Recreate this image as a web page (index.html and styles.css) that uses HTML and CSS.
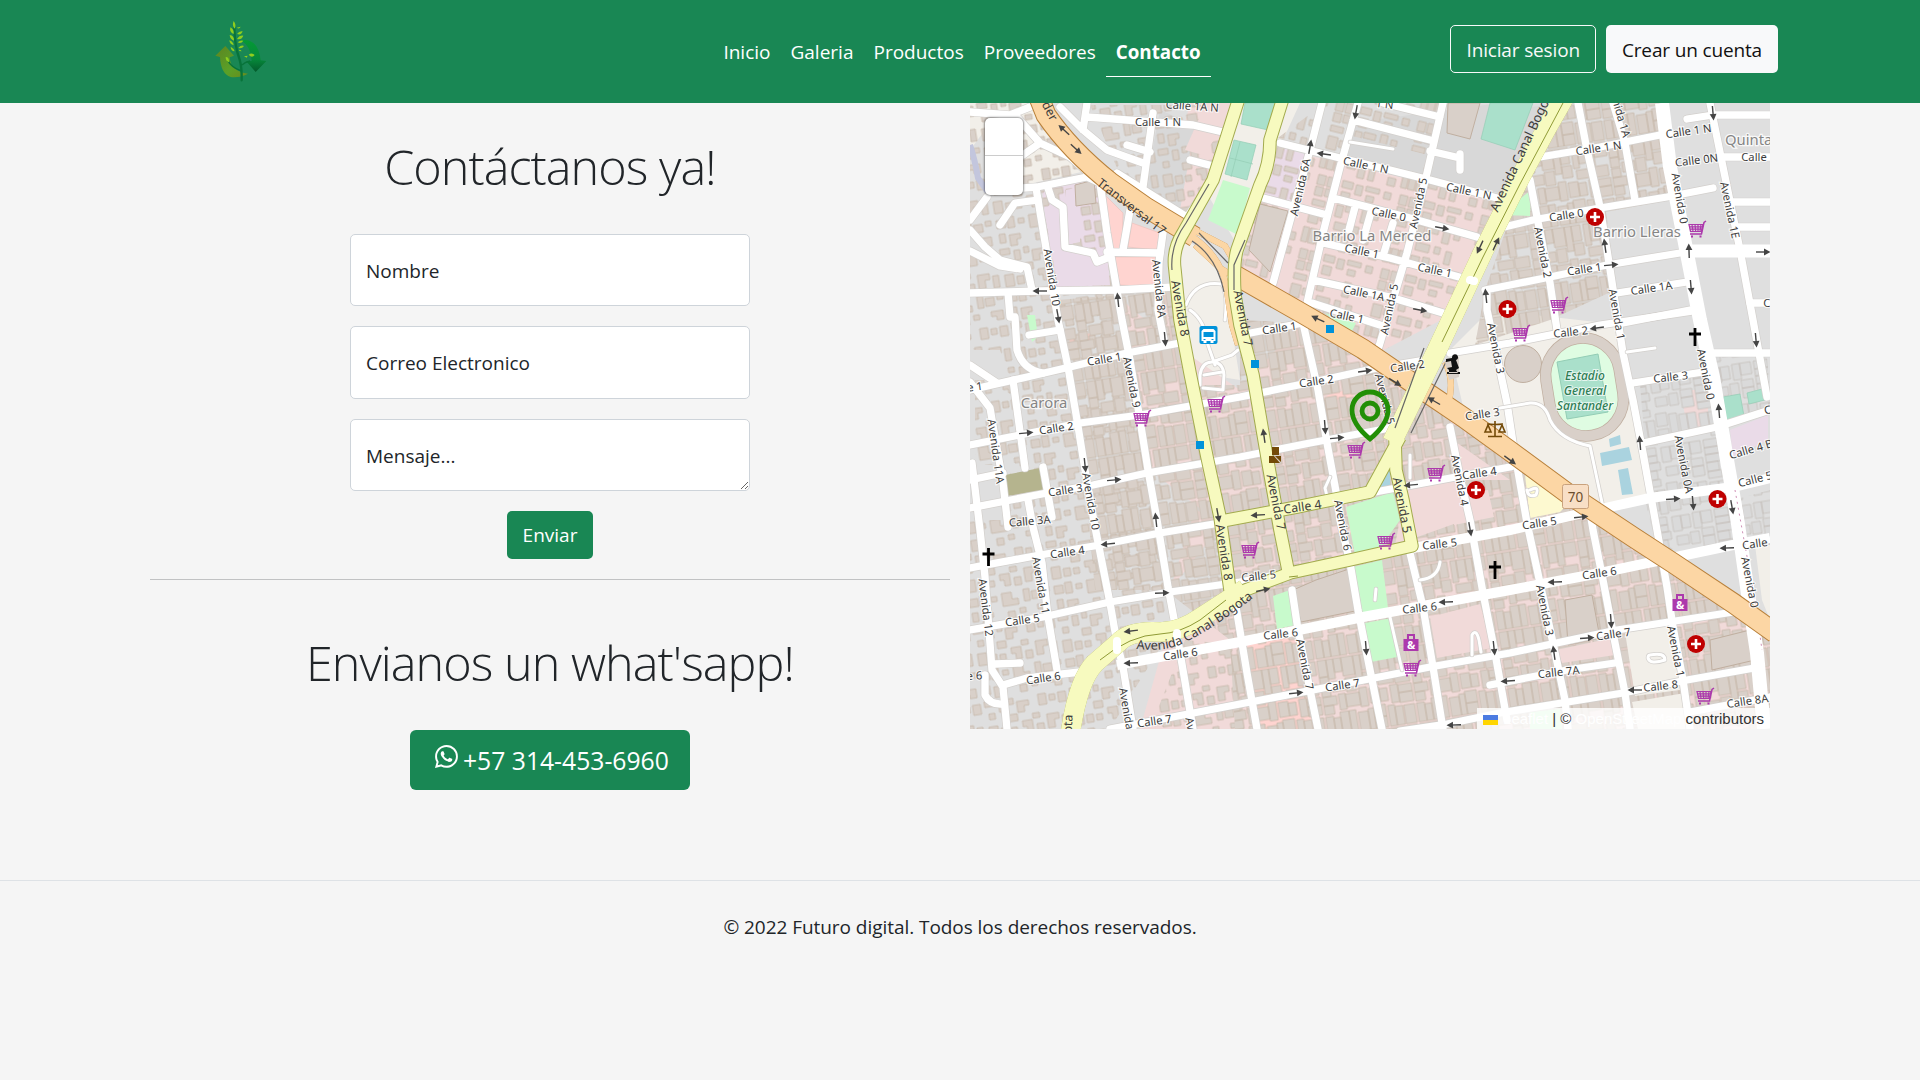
FILE: index.html
```html
<!DOCTYPE html>
<html lang="es">
<head>
<meta charset="utf-8">
<title>Contacto - Futuro digital</title>
<link rel="stylesheet" href="styles.css">
</head>
<body>
<header class="navbar">
  <a class="brand" href="#" aria-label="Inicio">
    <svg width="60" height="64" viewBox="60 58 180 192">
      <defs>
        <linearGradient id="g1" x1="0" y1="0" x2="0" y2="1"><stop offset="0" stop-color="#049a35"/><stop offset=".6" stop-color="#06883a"/><stop offset="1" stop-color="#035a2c"/></linearGradient>
        <linearGradient id="g2" x1="0" y1="0" x2="1" y2="1"><stop offset="0" stop-color="#5d8420"/><stop offset=".6" stop-color="#5aa128"/><stop offset="1" stop-color="#6b8a1c"/></linearGradient>
      </defs>
      <path fill="url(#g1)" d="M152 122Q205 114 212 182L229 184 197 217 168 184H185Q184 140 152 122Z"/>
      <path fill="url(#g2)" d="M76 168 106 139 132 168 119 173Q122 216 174 222 150 235 122 232 92 222 90 172Z"/>
      <path fill="none" stroke="#08733a" stroke-width="7" stroke-linecap="round" d="M133 85Q134 140 149 180 156 205 155 242"/>
      <path fill="none" stroke="#08733a" stroke-width="4" d="M152 213Q124 203 113 182M156 196Q164 188 180 184"/>
      <path fill="#8fce1e" d="M131 64q9 12 3 23-9-10-3-23ZM121 83q12 7 10 20-13-5-10-20ZM119 106q14 2 13 17-12-4-13-17ZM118 122q12 4 13 15-12-3-13-15ZM122 141q10 5 12 14-12-2-12-14ZM140 84l12-3q-4 9-12 3ZM141 103q7-10 17-8-4 13-17 8ZM141 118q8-12 19-10-5 13-19 10ZM143 128q8-8 17-5-7 10-17 5ZM145 145q8-10 17-6-6 9-17 6ZM147 151q5-2 8 4l-7-1ZM107 172q11 0 10 16-10-3-10-16ZM162 170l11-2-3 6ZM176 165q10-8 18 1-8 11-18-1Z"/>
    </svg>
  </a>
  <nav class="links">
    <a href="#">Inicio</a><a href="#">Galeria</a><a href="#">Productos</a><a href="#">Proveedores</a><a class="active" href="#">Contacto</a>
  </nav>
  <div class="account">
    <a class="btn btn-outline" href="#">Iniciar sesion</a>
    <a class="btn btn-light" href="#">Crear un cuenta</a>
  </div>
</header>

<main class="content">
  <section class="contact">
    <h1 class="title">Contáctanos ya!</h1>
    <form class="form">
      <input class="field" type="text" placeholder="Nombre">
      <input class="field" type="text" placeholder="Correo Electronico">
      <textarea class="field area" placeholder="Mensaje..."></textarea>
      <button class="btn btn-green" type="button">Enviar</button>
    </form>
    <hr class="rule">
    <h2 class="title title-wa">Envianos un what'sapp!</h2>
    <a class="whatsapp" href="#">
      <svg width="23" height="23" viewBox="0 0 16 16" fill="#fff"><path d="M13.601 2.326A7.854 7.854 0 0 0 7.994 0C3.627 0 .068 3.558.064 7.926c0 1.399.366 2.76 1.057 3.965L0 16l4.204-1.102a7.933 7.933 0 0 0 3.79.965h.004c4.368 0 7.926-3.558 7.93-7.93A7.898 7.898 0 0 0 13.6 2.326zM7.994 14.521a6.573 6.573 0 0 1-3.356-.92l-.24-.144-2.494.654.666-2.433-.156-.251a6.56 6.56 0 0 1-1.007-3.505c0-3.626 2.957-6.584 6.591-6.584a6.56 6.56 0 0 1 4.66 1.931 6.557 6.557 0 0 1 1.928 4.66c-.004 3.639-2.961 6.592-6.592 6.592zm3.615-4.934c-.197-.099-1.17-.578-1.353-.646-.182-.065-.315-.099-.445.099-.133.197-.513.646-.627.775-.114.133-.232.148-.43.05-.197-.1-.836-.308-1.592-.985-.59-.525-.985-1.175-1.103-1.372-.114-.198-.011-.304.088-.403.087-.088.197-.232.296-.346.1-.114.133-.198.198-.33.065-.134.034-.248-.015-.347-.05-.099-.445-1.076-.612-1.47-.16-.389-.323-.335-.445-.34-.114-.007-.247-.007-.38-.007a.729.729 0 0 0-.529.247c-.182.198-.691.677-.691 1.654 0 .977.71 1.916.81 2.049.098.133 1.394 2.132 3.383 2.992.47.205.84.326 1.129.418.475.152.904.129 1.246.08.38-.058 1.171-.48 1.338-.943.164-.464.164-.86.114-1.057-.049-.084-.182-.133-.38-.232z"/></svg>
      <span>+57 314-453-6960</span>
    </a>
  </section>

  <section class="map">
    <svg class="tiles" viewBox="970 103 800 626">
      <defs>
        <pattern id="sparse" width="86" height="74" patternUnits="userSpaceOnUse" patternTransform="rotate(-9)">
          <path class="bld" d="M3 4h9v8H3zM14 2h7v11h-7zM25 5h6v5h-6zM36 3h10v7h6v6H36zM58 2h6v12h-6zM66 5h9v8h-9zM78 3h6v5h-6zM4 18h6v9H4zM14 20h11v5h-4v6h-7zM40 22h7v7h-7zM52 20h6v5h-6zM70 19h12v9h-7v-4h-5zM2 33h10v6H2zM16 36h6v10h-6zM26 34h5v6h-5zM34 38h12v5h-5v6h-7zM56 34h8v11h-8zM67 36h6v6h-6zM76 35h8v10h-8zM5 46h6v6H5zM24 50h9v7h-9zM48 52h7v5h-7zM3 59h9v12H3zM15 62h7v8h-7zM25 63h6v6h-6zM37 58h10v12h-6v-6h-4zM51 63h7v8h-7zM62 55h12v6h-5v8h-7zM77 58h6v12h-6z"/>
        </pattern>
        <pattern id="dense" width="92" height="78" patternUnits="userSpaceOnUse" patternTransform="rotate(-9)">
          <path class="bld" d="M1 1h9v17H1zM10 1h7v20h-7zM17 1h8v14h-8zM25 1h12v19H25zM37 1h7v25h-7zM44 1h9v16h-9zM56 1h6v22h-6zM62 1h9v18h-9zM71 1h7v22h-7zM78 1h13v14H78zM1 18h9v10H1zM12 24h13v10H12zM26 22h10v14H26zM44 19h10v12H44zM58 25h16v9H58zM75 24h15v11H75zM1 29h9v9H1zM1 38h14v9H1zM1 47h10v9H1zM17 37h7v16h-7zM24 38h14v13H24zM38 34h8v19h-8zM48 36h10v15H48zM58 38h8v13h-8zM69 36h8v18h-8zM77 37h14v8H77zM77 45h14v10H77zM1 58h8v19H1zM9 60h7v17H9zM16 55h9v22h-9zM25 55h7v22h-7zM34 58h10v19H34zM44 56h6v21h-6zM50 54h12v12H50zM50 66h12v11H50zM64 56h7v21h-7zM71 58h8v19h-8zM80 58h11v19H80z"/>
        </pattern>
        <pattern id="plots" width="62" height="70" patternUnits="userSpaceOnUse" patternTransform="rotate(-9)">
          <path fill="#dadada" stroke="#c3bdb8" stroke-width=".7" d="M1 1h14v8H1zM1 9h14v7H1zM1 16h16v8H1zM1 24h12v9H1zM1 33h14v7H1zM20 2h9v15h-9zM29 2h9v13h-9zM41 1h8v16h-8zM49 1h11v12H49zM22 22h12v9H22zM36 20h9v12h-9zM48 18h12v8H48zM48 26h12v10H48zM1 44h9v20H1zM10 44h8v24h-8zM20 38h11v13H20zM33 40h8v22h-8zM43 42h8v22h-8zM51 42h9v20h-9zM20 54h11v12H20z"/>
        </pattern>
        <pattern id="merced" width="84" height="76" patternUnits="userSpaceOnUse" patternTransform="rotate(14)">
          <path class="bld" d="M3 2h11v7H3zM17 3h7v10h-7zM27 2h14v5H27zM46 3h7v7h-7zM62 2h8v10h-8zM72 2h9v10h-9zM4 13h9v9H4zM29 11h8v6h-8zM62 14h8v9h-8zM72 14h9v8h-9zM3 27h7v12H3zM12 26h12v6H12zM29 24h7v15h-7zM40 27h6v6h-6zM62 27h13v6H62zM5 44h14v8H5zM24 44h6v7h-6zM36 46h6v13h-6zM62 38h10v13H62zM74 40h7v7h-7zM3 58h9v7H3zM15 57h7v15h-7zM26 60h6v12h-6zM46 64h8v8h-8zM60 56h6v15h-6zM67 56h7v15h-7zM75 56h6v15h-6z"/>
        </pattern>
        <g id="arr"><path d="M-7 0H4" stroke="#444" stroke-width="1.4"/><path d="M7.500 0 1-3.400V3.400Z" fill="#444"/></g>
        <g id="cart" fill="none" stroke="#ac39ac" stroke-width="1.200"><path d="M-8-4.500H6L4.500 2.500H-6.500ZM-7.500-2.200H5.500M-7 .200H5M-5-4.500-4 2.500M-2-4.500-1.300 2.500M1-4.500V2.500M4-4.500 3 2.500"/><path stroke-width="1.500" d="M9-8 7-6.500 4.500 5H-7"/><path d="M-6 7.500h2M2.500 7.500h2" stroke-width="2.200"/></g>
        <g id="hosp"><circle r="9" fill="#bf0000"/><path d="M0-5V5M-5 0H5" stroke="#fff" stroke-width="2.6"/></g>
        <path id="church" d="M0-9V9M-6-3H6" stroke="#000" stroke-width="2.8"/>
        <g id="bag"><path d="M-3-4V-8H3V-4" fill="none" stroke="#ac39ac" stroke-width="2"/><rect x="-7.500" y="-4" width="15" height="12" fill="#ac39ac"/><text class="amp" x="0" y="6">&amp;</text></g>
        <path id="canal" d="M1136 649Q1165 652 1182 644 1215 628 1258 594"/>
      </defs>

      <rect x="970" y="103" width="800" height="626" fill="#dfdfdf"/>
      <!-- land use -->
      <path fill="#f2efe9" d="M970 103H1042L1090 170 1020 186 985 130 970 150ZM1180 233 1240 285 1232 330 1240 380 1190 372 1175 290ZM1490 310 1622 325 1650 500 1600 510 1500 445 1465 415 1450 350ZM1240 103H1300L1260 190 1240 250 1205 190Z"/>
      <path fill="#f1dad9" d="M1286 150 1497 200 1445 318 1380 352 1235 285 1263 190ZM1190 103 1240 103 1190 218 1165 205ZM1122 300 1175 345 1240 390 1300 323 1510 453 1600 510 1770 630V729H1140L1165 640 1225 590 1215 520 1150 470 1128 360ZM1170 590 1225 520 1195 510ZM1680 390h28v40h-20z"/>
      <path fill="#d8d8d8" d="M1160 110 1195 125 1180 210 1145 190ZM1350 123 1500 103 1510 195 1430 180 1350 150Z"/>
      <path fill="#eadbe8" d="M1042 190 1090 178 1100 190 1110 285 1055 287ZM1278 147 1308 155 1292 203 1265 195ZM1730 430 1768 415V440L1733 457Z"/>
      <path fill="#ffd4d0" d="M1247 643 1297 633 1313 729H1258ZM1068 336l25-3 2 12-23 4zM1328 395l25-7v10l-30 3z"/>
      <path fill="#f1dad9" d="M1155 290h18l7 50-18 3zM1135 358l25-8 5 60-22 5z"/>
      <!-- buildings -->
      <path fill="url(#sparse)" d="M970 103H1042L1110 190 1122 300 1128 360 1150 470 1165 590V640L1110 729H970V520H1010V465H975V380H1010L1000 350H970ZM1090 105H1240L1190 225 1120 175ZM1185 640 1240 645 1250 729H1150Z"/>
      <path fill="url(#dense)" d="M1058 300 1175 290 1195 385 1240 385 1240 320 1300 323 1490 440 1510 453 1600 510 1770 630V729H1235L1230 640 1165 590 1095 590 1085 480 1068 360ZM1530 160 1560 103H1660L1700 320 1630 250 1600 215 1615 290 1550 320 1475 345 1485 290Z"/>
      <path fill="#dfdfdf" d="M1606 212 1680 198 1713 377 1633 390Z"/>
      <path fill="url(#merced)" d="M1275 140 1325 103H1440L1425 180 1497 200 1445 318 1380 352 1235 285Z"/>
      <path fill="#d8d8d8" d="M1348 135 1428 155 1420 178 1345 158ZM1440 120 1560 103 1510 195 1430 176Z"/>
      <path fill="url(#plots)" d="M1640 385 1708 375 1733 500 1770 490V410L1715 430 1710 355 1767 355 1770 400V545L1660 560 1650 500ZM1645 500 1735 490V540L1660 560Z"/>
      <path fill="#eadbe8" d="M1050 205 1062 210 1064 250 1092 258 1096 266 1108 262 1110 285 1058 287 1044 210ZM1066 190l14-3v55l-14 3z"/>
      <path fill="#ffd4d0" stroke="#eec1bb" stroke-width=".7" d="M1103 193 1123 213 1122 250 1110 250ZM1132 223 1160 233 1157 250 1128 247ZM1113 257 1157 257 1160 287 1120 285Z"/>
      <path fill="#f2efe9" d="M1625 632 1670 620 1680 690 1635 696ZM1632 702 1685 693 1688 729H1638ZM1755 545H1770V620L1762 600Z"/>
      <path fill="#f1dad9" d="M1430 617 1480 604 1492 648 1437 658ZM1556 650 1612 638 1615 655 1562 663ZM1510 480 1453 440 1465 520 1395 545 1408 480ZM1240 105h-35l-20 45 18 5zM1453 495l35-5 6 27-40 8z"/>
      <path fill="#d9d0c9" stroke="#c0afa0" d="M1260 204 1288 211 1270 272 1249 250ZM1448 103H1480L1470 139 1447 133ZM1075 185 1094 180 1096 203 1076 206ZM1293 590 1316 580 1355 567 1360 610 1301 622ZM1565 600 1592 595 1600 638 1568 645ZM1710 640 1750 630 1755 660 1712 670Z"/>
      <!-- parks, pitches and water -->
      <path fill="#c8facc" d="M1223 180 1250 188 1238 235 1208 220ZM1346 507 1393 492 1400 520 1380 548 1355 555ZM1353 567 1382 560 1388 608 1362 615ZM1365 623 1392 618 1397 657 1371 662ZM1273 596 1290 590 1295 625 1277 629ZM1325 313 1356 323 1350 335ZM1027 315h8l3 22-6 5zM1500 215 1531 190 1530 216ZM1236 582l48-4-12 9-34 7zM1530 712l30-3 2 20h-32z"/>
      <path fill="#aae0cb" stroke="#93cdb5" stroke-width=".7" d="M1245 103H1277L1268 130 1241 124ZM1234 140 1256 145 1247 180 1225 174ZM1490 103H1533L1515 150 1481 139ZM1723 397l17-3 4 22-17 4zM1747 393l15-4 3 11-16 4zM1240 142l-9 35M1230 158l23 6"/>
      <path fill="#b5b48e" d="M1005 475 1040 468 1044 490 1007 496Z"/>
      <path fill="#aad3df" d="M1609 439l11-4 1 9-11 3zM1600 453l29-6 3 13-30 6zM1618 470l10-2 5 26-11 1zM1380 487l10-22v20l-4 6z"/>
      <path fill="none" stroke="#c3c6dd" stroke-width="6" d="M970 145Q975 160 978 178L988 192"/>
      <circle cx="1523" cy="364" r="18.500" fill="#d9d0c9" stroke="#c0afa0"/>
      <g transform="translate(1584.500 387) rotate(-9)"><rect x="-37" y="-49" width="74" height="98" rx="37" fill="#dffce2" stroke="#c0afa0" stroke-width="11.500"/><rect x="-37" y="-49" width="74" height="98" rx="37" fill="none" stroke="#d9d0c9" stroke-width="10"/></g>
      <path fill="#aae0cb" stroke="#93cdb5" d="M1557 362 1598 354 1608 412 1567 419Z"/>
      <path fill="#fdf9d0" d="M1525 475 1567 505 1560 512 1530 518Z"/>

      <!-- local streets -->
      <g class="street casing"><use href="#streets"/></g>
      <g class="street"><g id="streets">
        <path d="M1036 188 1058 320 1068 367 1077 420 1085 470 1095 527 1110 603 1117 643 1123 667 1133 729M1100 183 1107 233 1122 320 1130 360 1140 420 1148 470 1157 520 1168 587 1177 635 1183 670 1193 729M1163 233 1159 262 1158 310 1165 345M1013 380 1025 468M970 382 990 408 1003 483 1008 527M1028 500 1033 527 1042 563 1048 617 1057 670M972 463 980 530 985 577 992 670 1003 687 1007 729M1043 467 1052 517"/>
        <path d="M970 293 1040 291 1117 290 1173 287M970 390 1027 377 1070 367 1127 353 1180 343M970 445 1020 435 1080 423 1140 415 1240 397 1313 382 1377 368 1425 360M1450 353 1510 343 1600 325 1700 310M970 508 1047 493 1093 485 1147 473 1240 457 1310 443 1390 428M970 480 1003 473M970 568 1040 555 1100 545 1160 533 1220 523M970 630 1043 617 1110 602 1170 592 1240 582 1285 573M1003 685 1027 678 1080 672M1110 729 1240 704 1313 690 1430 667 1510 653 1617 630 1740 611M1400 731 1447 724 1500 713 1623 693 1687 680 1760 667M1490 685 1567 670 1615 663M1690 712 1770 697M1375 492 1510 467 1522 463"/>
        <path d="M1643 443 1717 427 1770 410M1633 383 1703 372M1713 353H1770M1303 323 1318 390 1327 443 1337 497 1340 520 1350 563 1358 610 1370 670 1382 729M1240 335 1303 323M1292 590 1298 630 1310 690 1318 729M1234 595 1237 613 1247 673 1257 729M1410 553 1423 607 1433 667 1443 729M1450 427 1460 477 1470 520 1483 593 1495 653 1507 720M1487 293V310L1507 403 1513 443 1527 523 1540 583 1553 643 1565 700 1568 729M1485 290 1510 285 1550 277 1607 265 1680 253M1530 180 1537 217 1550 283 1557 330M1578 103 1587 150 1600 207 1607 250 1623 353 1633 400 1643 453 1657 530 1667 587 1673 627 1683 680 1690 729M1590 512 1593 530 1603 580 1615 643 1625 693 1630 729M1613 103 1625 143 1635 200M1710 103 1723 167 1740 250 1753 320 1767 397"/>
        <path d="M1540 157 1600 147 1660 135M1687 119 1713 115H1770M1500 228 1533 220 1600 208 1667 197 1713 188M1720 157H1770M1733 202H1770M1737 227H1770M1750 303H1770M1617 293 1687 282M1623 323 1690 310M1353 120 1430 140M1383 103 1440 117M1280 143 1340 158 1390 170 1430 180 1497 198M1263 198 1327 215M1333 198 1410 218 1477 237M1323 243 1390 258 1470 280M1313 280 1390 297 1443 313M1312 303 1380 325M1322 103 1310 150 1293 210 1273 283M1358 103 1340 167 1323 233 1307 303M1443 103 1427 173 1407 253 1393 300 1377 353M1355 207 1349 230M1371 212 1363 240M1393 223 1383 256M1430 151 1460 158M1460 154V170"/>
        <path d="M970 112 1010 115 1030 107M1017 117 1040 143 1070 157 1093 177M1040 143 1023 155M1023 188 1037 187 1087 177 1100 183M987 197 970 220M1000 225 1015 203 1038 200M1048 188 1052 200 1063 207 1065 247 1093 253 1097 262 1107 258M970 230 985 247 1000 260 1027 267 1032 290M970 251 1000 266 1020 269M1008 293 1010 317H1015L1017 350Q1023 370 1043 373M1029 335 1060 330M970 365 997 383M1060 107 1083 130 1107 150 1143 163M1087 103 1083 130M1087 117 1127 120 1193 125 1227 133M1153 113 1143 187M1127 145 1150 152M1117 173 1187 217 1213 180M1130 210 1123 250M1107 252 1160 253M1190 160 1213 166M995 664 1020 663M985 675V695Q990 705 1003 704"/>
      </g></g>
      <g class="street thin casing"><use href="#lanes"/></g>
      <g class="street thin"><g id="lanes"><path d="M1500 408 1530 403Q1545 402 1550 420 1560 440 1590 446L1603 507M1390 617 1402 670M1190 310Q1205 320 1208 345L1215 365M1238 350 1232 355 1212 362M1200 385V375Q1202 362 1212 362 1223 362 1224 375L1223 390 1203 388M1204 375 1222 372M1376 589 1375 600M1472 655V635Q1476 628 1479 640L1481 652M1440 562Q1438 578 1420 580M1627 352 1655 348M1328 500 1325 488 1330 477M1410 478V455M1530 490Q1540 485 1536 495 1528 498 1527 490M1650 655Q1665 652 1665 660 1650 665 1648 658 1648 655 1650 655M1186 305Q1195 280 1222 284 1228 295 1225 320M1350 142 1393 149"/></g></g>
      <g fill="none" stroke="#fff">
        <path stroke-width="10" d="M1117 665 1240 642 1363 617 1510 590 1600 573 1733 545 1770 538M1413 548 1510 530 1583 513 1650 498 1733 487 1770 478"/>
        <path stroke-width="13" d="M1690 251H1770"/>
        <path stroke-width="14" d="M1662 103 1670 167 1683 233 1700 320 1713 377 1727 460 1737 517 1747 587 1757 653 1764 729"/>
      </g>
      <path fill="none" stroke="#cf8fb5" stroke-width="1" stroke-dasharray="2 4" d="M1735 490 1744 540 1755 600 1762 650"/>

      <!-- trunk road -->
      <g class="trunk edge"><use href="#tr"/></g>
      <g class="trunk"><g id="tr"><path d="M1038 95 1046 115Q1070 150 1110 182L1147 208 1195 237M1235 275 1305 315 1363 349 1417 386 1463 417 1510 451 1567 493 1633 537 1673 563 1733 603 1775 633"/><path class="slim" d="M1190 235Q1220 255 1226 285L1232 325 1238 345M1195 245 1220 268 1240 280M1190 228 1225 246 1240 272M1432 345 1395 430M1445 362Q1455 380 1448 405"/></g></g>

      <!-- avenues -->
      <g class="avenue edge"><use href="#av"/></g>
      <g class="avenue"><g id="av">
        <path d="M1240 95 1213 180 1183 233Q1172 250 1175 270L1180 320 1190 373 1207 457 1220 517 1230 590"/>
        <path d="M1284 95 1270 140Q1270 165 1260 185L1237 250Q1233 265 1235 295L1240 325 1253 375 1267 457 1280 530 1289 575"/>
        <path d="M1222 521 1297 507 1370 492 1400 437M1395 440 1396 470 1403 500 1412 546 1350 560 1290 573 1240 592"/>
        <path class="wide" d="M1563 98 1520 178 1483 252 1437 350 1392 442M1564 98 1532 154"/>
        <path class="wide" d="M1245 589 1200 618Q1180 632 1160 632 1130 630 1118 643L1095 663Q1078 680 1070 735"/>
      </g></g>
      <path fill="none" stroke="#8f9a35" stroke-width="1" d="M1563 103 1520 184 1483 257 1442 342M1226 600 1200 620Q1180 633 1160 634 1130 635 1100 660M1289 577 1298 576"/>
      <path fill="none" stroke="#666" stroke-width="1.200" d="M1209 184 1186 223Q1170 245 1172 270M1245 240 1234 265 1234 290M1424 348 1395 428M1447 360 1411 433M1192 241Q1217 257 1224 292M1199 233 1228 263"/>
      <path fill="none" stroke="#fff" stroke-width="8" stroke-linecap="round" d="M1117 641V650M1177 633V636M1470 280 1474 281"/>

      <!-- direction arrows -->
      <use href="#arr" transform="translate(1064 130) rotate(222)"/><use href="#arr" transform="translate(1076 149) rotate(42)"/><use href="#arr" transform="translate(1040 291) rotate(180)"/><use href="#arr" transform="translate(1118 300) rotate(-96)"/><use href="#arr" transform="translate(1058 316) rotate(80)"/><use href="#arr" transform="translate(1356 112) rotate(100)"/><use href="#arr" transform="translate(1310 147) rotate(-80)"/><use href="#arr" transform="translate(1324 154) rotate(188)"/><use href="#arr" transform="translate(1442 228) rotate(10)"/><use href="#arr" transform="translate(1480 247) rotate(115)"/><use href="#arr" transform="translate(1496 244) rotate(-65)"/><use href="#arr" transform="translate(1420 310) rotate(10)"/><use href="#arr" transform="translate(1486 296) rotate(-96)"/><use href="#arr" transform="translate(1713 113) rotate(85)"/><use href="#arr" transform="translate(1605 246) rotate(-98)"/><use href="#arr" transform="translate(1611 265) rotate(-5)"/><use href="#arr" transform="translate(1689 251) rotate(-92)"/><use href="#arr" transform="translate(1691 287) rotate(85)"/><use href="#arr" transform="translate(1763 252)"/><use href="#arr" transform="translate(1165 339) rotate(85)"/><use href="#arr" transform="translate(1026 433) rotate(-5)"/><use href="#arr" transform="translate(1085 465) rotate(84)"/><use href="#arr" transform="translate(1114 480) rotate(-5)"/><use href="#arr" transform="translate(1156 520) rotate(-96)"/><use href="#arr" transform="translate(1218 515) rotate(80)"/><use href="#arr" transform="translate(1318 319) rotate(205)"/><use href="#arr" transform="translate(1365 371) rotate(-8)"/><use href="#arr" transform="translate(1395 382) rotate(32)"/><use href="#arr" transform="translate(1434 401) rotate(210)"/><use href="#arr" transform="translate(1325 427) rotate(86)"/><use href="#arr" transform="translate(1264 436) rotate(-98)"/><use href="#arr" transform="translate(1337 438) rotate(-5)"/><use href="#arr" transform="translate(1411 485) rotate(175)"/><use href="#arr" transform="translate(1258 515) rotate(177)"/><use href="#arr" transform="translate(1597 328) rotate(172)"/><use href="#arr" transform="translate(1756 340) rotate(85)"/><use href="#arr" transform="translate(1719 411) rotate(-95)"/><use href="#arr" transform="translate(1640 443) rotate(-95)"/><use href="#arr" transform="translate(1510 460) rotate(36)"/><use href="#arr" transform="translate(1673 499) rotate(-4)"/><use href="#arr" transform="translate(1693 503) rotate(85)"/><use href="#arr" transform="translate(1732 507) rotate(80)"/><use href="#arr" transform="translate(1581 517) rotate(-6)"/><use href="#arr" transform="translate(1108 544) rotate(174)"/><use href="#arr" transform="translate(1162 593) rotate(-2)"/><use href="#arr" transform="translate(1131 631) rotate(173)"/><use href="#arr" transform="translate(1131 663) rotate(178)"/><use href="#arr" transform="translate(1263 590) rotate(-12)"/><use href="#arr" transform="translate(1470 529) rotate(80)"/><use href="#arr" transform="translate(1446 602) rotate(178)"/><use href="#arr" transform="translate(1366 648) rotate(86)"/><use href="#arr" transform="translate(1296 693) rotate(-6)"/><use href="#arr" transform="translate(1494 648) rotate(84)"/><use href="#arr" transform="translate(1454 725) rotate(178)"/><use href="#arr" transform="translate(1727 548) rotate(178)"/><use href="#arr" transform="translate(1555 582) rotate(178)"/><use href="#arr" transform="translate(1611 621) rotate(86)"/><use href="#arr" transform="translate(1587 638) rotate(-4)"/><use href="#arr" transform="translate(1554 653) rotate(-98)"/><use href="#arr" transform="translate(1508 681) rotate(176)"/><use href="#arr" transform="translate(1635 690) rotate(180)"/>

      <!-- street names -->
      <g class="name">
        <text transform="translate(1046 113) rotate(62)" class="big">der</text><text transform="translate(1192 110) rotate(4)">Calle 1A N</text><text transform="translate(1158 126)">Calle 1 N</text><text class="big" transform="translate(1129 210) rotate(38)">Transversal 17</text><text transform="translate(1048 278) rotate(81)">Avenida 10</text><text transform="translate(1155 289) rotate(84)">Avenida 8A</text><text class="big" transform="translate(1176 309) rotate(80)">Avenida 8</text>
        <text transform="translate(1384 108) rotate(8)">1 N</text><text transform="translate(1365 169) rotate(12)">Calle 1 N</text><text transform="translate(1468 195) rotate(12)">Calle 1 N</text><text transform="translate(1304 188) rotate(-77)">Avenida 6A</text><text transform="translate(1422 204) rotate(-78)">Avenida 5</text><text transform="translate(1388 218) rotate(12)">Calle 0</text><text transform="translate(1361 255) rotate(12)">Calle 1</text><text transform="translate(1434 274) rotate(12)">Calle 1</text><text transform="translate(1363 297) rotate(12)">Calle 1A</text><text transform="translate(1393 310) rotate(-78)">Avenida 5</text><text transform="translate(1346 320) rotate(12)">Calle 1</text><text class="big" transform="translate(1239 319) rotate(79)">Avenida 7</text>
        <text class="big canal" transform="translate(1526 152) rotate(-65)">Avenida Canal Bogota</text><text transform="translate(1599 152) rotate(-8)">Calle 1 N</text><text transform="translate(1615 110) rotate(74)">Avenida 1A</text><text transform="translate(1689 135) rotate(-8)">Calle 1 N</text><text transform="translate(1697 164) rotate(-7)">Calle 0N</text><text transform="translate(1754 161)">Calle</text><text transform="translate(1676 199) rotate(80)">Avenida 0</text><text transform="translate(1726 211) rotate(78)">Avenida 1E</text><text transform="translate(1567 219) rotate(-8)">Calle 0</text><text transform="translate(1539 253) rotate(79)">Avenida 2</text><text transform="translate(1585 273) rotate(-8)">Calle 1</text><text transform="translate(1652 292) rotate(-8)">Calle 1A</text><text transform="translate(1613 315) rotate(80)">Avenida 1</text><text transform="translate(1776 307)">Calle</text>
        <text transform="translate(1105 363) rotate(-9)">Calle 1</text><text transform="translate(966 392) rotate(-8)">Calle 1</text><text transform="translate(1128 383) rotate(79)">Avenida 9</text><text transform="translate(1057 432) rotate(-8)">Calle 2</text><text transform="translate(992 452) rotate(82)">Avenida 11A</text><text transform="translate(1066 494) rotate(-8)">Calle 3</text><text transform="translate(1030 525) rotate(-5)">Calle 3A</text><text transform="translate(1087 502) rotate(80)">Avenida 10</text>
        <text transform="translate(1280 332) rotate(-8)">Calle 1</text><text transform="translate(1317 385) rotate(-8)">Calle 2</text><text transform="translate(1408 370) rotate(-8)">Calle 2</text><text transform="translate(1381 400) rotate(76)">Avenida 5</text><text transform="translate(1492 349) rotate(79)">Avenida 3</text><text transform="translate(1483 418) rotate(-8)">Calle 3</text><text transform="translate(1480 477) rotate(-8)">Calle 4</text><text transform="translate(1456 481) rotate(79)">Avenida 4</text><text class="big" transform="translate(1398 506) rotate(79)">Avenida 5</text><text class="big" transform="translate(1272 503) rotate(79)">Avenida 7</text><text class="big" transform="translate(1303 511) rotate(-8)">Calle 4</text><text transform="translate(1339 526) rotate(79)">Avenida 6</text>
        <text transform="translate(1571 336) rotate(-6)">Calle 2</text><text transform="translate(1671 381) rotate(-6)">Calle 3</text><text transform="translate(1702 375) rotate(79)">Avenida 0</text><text transform="translate(1752 453) rotate(-16)">Calle 4 B</text><text transform="translate(1756 483) rotate(-14)">Calle 5</text><text transform="translate(1680 465) rotate(79)">Avenida 0A</text><text transform="translate(1540 527) rotate(-8)">Calle 5</text><text transform="translate(1782 411) rotate(-12)">Calle 4</text>
        <text transform="translate(1068 556) rotate(-8)">Calle 4</text><text transform="translate(1037 586) rotate(80)">Avenida 11</text><text transform="translate(982 608) rotate(83)">Avenida 12</text><text transform="translate(1023 624) rotate(-8)">Calle 5</text><text transform="translate(1044 682) rotate(-8)">Calle 6</text><text transform="translate(965 680) rotate(-2)">Calle 6</text><text transform="translate(1181 658) rotate(-8)">Calle 6</text><text transform="translate(1124 717) rotate(80)">Avenida 10</text><text transform="translate(1155 725) rotate(-8)">Calle 7</text><text class="big" transform="translate(1072 728) rotate(-87)">gota</text><text transform="translate(1189 739) rotate(80)">Avenida</text><text class="big" transform="translate(1220 553) rotate(81)">Avenida 8</text>
        <text transform="translate(1259 580) rotate(-6)">Calle 5</text><text transform="translate(1440 548) rotate(-6)">Calle 5</text><text transform="translate(1281 638) rotate(-6)">Calle 6</text><text transform="translate(1420 612) rotate(-6)">Calle 6</text><text transform="translate(1301 665) rotate(79)">Avenida 7</text><text transform="translate(1343 689) rotate(-8)">Calle 7</text>
        <text transform="translate(1600 577) rotate(-8)">Calle 6</text><text transform="translate(1541 611) rotate(79)">Avenida 3</text><text transform="translate(1614 638) rotate(-8)">Calle 7</text><text transform="translate(1672 652) rotate(79)">Avenida 1</text><text transform="translate(1559 676) rotate(-6)">Calle 7A</text><text transform="translate(1661 690) rotate(-6)">Calle 8</text><text transform="translate(1748 705) rotate(-8)">Calle 8A</text><text transform="translate(1746 583) rotate(79)">Avenida 0</text><text transform="translate(1760 547) rotate(-8)">Calle 5</text>
        <text class="big curve"><textPath href="#canal">Avenida Canal Bogota</textPath></text>
      </g>
      <g class="place"><text x="1372" y="241">Barrio La Merced</text><text x="1637" y="237">Barrio Lleras</text><text x="1044" y="408">Carora</text><text x="1725" y="145" class="left">Quinta Oriental</text></g>
      <g class="stadium"><text x="1585" y="380">Estadio</text><text x="1585" y="395">General</text><text x="1585" y="410">Santander</text></g>
      <g><rect x="1562.500" y="484.500" width="26" height="24" rx="2" fill="#f8dfc6" stroke="#c9a27d"/><text class="ref" x="1575.500" y="501.500">70</text></g>

      <!-- points of interest -->
      <use href="#cart" x="1697" y="229"/><use href="#cart" x="1559" y="305"/><use href="#cart" x="1521" y="333"/><use href="#cart" x="1142" y="418"/><use href="#cart" x="1216" y="404"/><use href="#cart" x="1356" y="450"/><use href="#cart" x="1436" y="473"/><use href="#cart" x="1250" y="550"/><use href="#cart" x="1386" y="541"/><use href="#cart" x="1412" y="668"/><use href="#cart" x="1705" y="696"/>
      <use href="#hosp" x="1595" y="217"/><use href="#hosp" x="1507.500" y="309"/><use href="#hosp" x="1476" y="490"/><use href="#hosp" x="1717.500" y="499"/><use href="#hosp" x="1696" y="644"/>
      <use href="#church" x="1695" y="337"/><use href="#church" x="988.500" y="557"/><use href="#church" x="1495" y="570"/>
      <use href="#bag" x="1411" y="643"/><use href="#bag" x="1680" y="603"/>
      <path fill="#0092da" d="M1326 325h8v8h-8zM1251 360h8v8h-8zM1196 441h8v8h-8z"/>
      <g transform="translate(1208.500 335)"><rect x="-9" y="-9" width="18" height="18" rx="2" fill="#0092da"/><path fill="#fff" fill-rule="evenodd" d="M-5-6H5L7-4V6H5V8H2V6H-2V8H-5V6H-7V-4ZM-5-3V2H5V-3ZM-5 4h2v1h-2zM3 4h2v1H3z"/></g>
      <path fill="#d9d0c9" d="M1445 362l14-5v20l-10 3z"/>
      <path fill="#111" d="M1452 357a3 3 0 1 1 4 3l3 8-3 2 2 3h-9v-3l-2-2 5-1-1-6-5 1v-3l6-1ZM1447 374h13v-2h-13z"/>
      <path fill="#734a08" d="M1272 447h7v8h-7zM1269 456h5l6 7h-11zM1275 456h6v6z"/>
      <path fill="none" stroke="#734a08" stroke-width="1.600" d="M1495 421V436M1488 436.500H1502M1487 424Q1495 425 1503 424M1488 425 1485 432H1491ZM1502 425 1499 432H1505Z"/>

      <g fill="none" stroke="#228f06" stroke-width="4.800"><path d="M1370 439Q1352 424 1352 410A18 18 0 0 1 1388 410Q1388 424 1370 439Z"/><circle cx="1370" cy="411" r="8"/></g>
    </svg>
    <div class="zoomer"><span></span><span></span></div>
    <div class="credit"><svg width="15" height="10" viewBox="0 0 15 10"><path fill="#4c7be1" d="M0 0h15v5H0z"/><path fill="#ffd500" d="M0 5h15v5H0z"/></svg><a href="#">Leaflet</a> | © <a href="#">OpenStreetMap</a> contributors</div>
  </section>
</main>

<footer class="footer">© 2022 Futuro digital. Todos los derechos reservados.</footer>
</body>
</html>
```
FILE: styles.css
```css
* { box-sizing: border-box; }
body { margin: 0; min-height: 1080px; background: #f5f5f5; color: #212529; font: 19px/30px "Open Sans", sans-serif; overflow: hidden; }
a { color: inherit; text-decoration: none; }

.navbar { display: grid; grid-template-columns: 1fr auto 1fr; align-items: start; height: 103px; padding: 0 142px 0 210px; background: #198754; color: #fff; }
.brand { padding-top: 19px; line-height: 0; }
.links { display: flex; padding-top: 27px; margin-right: 64px; }
.links a { padding: 10px 10px 9px; height: 50px; border-bottom: 1px solid transparent; }
.links .active { font-weight: 700; font-size: 18.8px; border-color: #fff; }
.account { display: flex; justify-content: flex-end; gap: 10px; padding-top: 25px; }

.btn { display: inline-block; height: 48px; padding: 9px 15px 7px; border: 1px solid transparent; border-radius: 5px; font: inherit; letter-spacing: -.15px; white-space: nowrap; }
.btn-outline { border-color: #f8f9fa; color: #f8f9fa; }
.btn-light { background: #f8f9fa; color: #111; }
.btn-green { padding: 8px 15px; background: #198754; color: #fff; letter-spacing: 0; }

.content { display: grid; grid-template-columns: 800px 800px; column-gap: 20px; padding-left: 150px; height: 777px; }
.contact { display: flex; flex-direction: column; align-items: center; }
.title { margin: 33px 0 0; font-size: 48.5px; line-height: 60px; font-weight: 300; letter-spacing: -.95px; white-space: nowrap; }
.form { display: flex; flex-direction: column; align-items: center; gap: 20px; margin-top: 38px; width: 400px; }
.field { display: block; width: 400px; height: 72.3px; margin: 0; padding: 1px 15px 0; border: 1px solid #ced4da; border-radius: 5px; background: #fff; font: inherit; color: #212529; outline: 0; }
.area { padding-top: 21px; overflow: hidden; resize: both; }
.field::placeholder { color: #212529; opacity: 1; }
.rule { width: 100%; margin: 20px 0 0; border: 0; border-top: 1px solid #c1c2c3; }
.title-wa { margin-top: 52px; }
.whatsapp { display: flex; align-items: center; gap: 5px; width: 280px; height: 60px; margin-top: 38px; padding: 2px 0 0 25px; border-radius: 6px; background: #198754; color: #fff; font-size: 24.7px; white-space: nowrap; }
.whatsapp svg { position: relative; top: -4px; }

.map { position: relative; width: 800px; height: 626px; overflow: hidden; }
.tiles { display: block; width: 800px; height: 626px; font-family: "Noto Sans", sans-serif; }
.bld { fill: #d9d0c9; stroke: #c6b7aa; stroke-width: .8; }
.street { fill: none; stroke: #fff; stroke-width: 7.3; stroke-linejoin: round; stroke-linecap: round; }
.casing { stroke: #d3d0cd; stroke-width: 8.7; }
.thin { stroke-width: 3; }
.thin.casing { stroke-width: 4.5; }
.trunk { fill: none; stroke: #fcd6a4; stroke-width: 19; }
.trunk.edge { stroke: #b9803a; stroke-width: 21; }
.trunk .slim { stroke-width: 6; }
.avenue { fill: none; stroke: #f7fabf; stroke-width: 11.5; stroke-linejoin: round; }
.avenue.edge { stroke: #a3ab4e; stroke-width: 13.5; }
.avenue .wide { stroke-width: 19.5; }
.name text { font-size: 11.2px; fill: #3c3c3c; text-anchor: middle; paint-order: stroke; stroke: rgba(255,255,255,.8); stroke-width: 2.2px; }
.name .big { font-size: 12.3px; stroke: none; }
.name .canal { font-size: 13px; }
.name .curve { text-anchor: start; font-size: 12.8px; }
.place text { font-size: 14.8px; fill: #858585; text-anchor: middle; paint-order: stroke; stroke: rgba(255,255,255,.8); stroke-width: 2.5px; }
.place .left { text-anchor: start; }
.stadium text { font-size: 12px; font-style: italic; font-weight: 500; fill: #2f7d55; text-anchor: middle; paint-order: stroke; stroke: rgba(255,255,255,.7); stroke-width: 2px; }
.ref { font-size: 13.5px; fill: #6b4d2c; text-anchor: middle; }
.amp { font-size: 11px; font-weight: 700; fill: #fff; text-anchor: middle; }

.zoomer { position: absolute; left: 15px; top: 15px; width: 38px; height: 77px; border-radius: 5px; background: #fff; box-shadow: 0 0 2px 1px rgba(0,0,0,.4); }
.zoomer span { display: block; height: 38px; }
.zoomer span:first-child { border-bottom: 1px solid #ccc; }
.credit { position: absolute; right: 0; bottom: 0; height: 21px; padding: 0 6px; background: rgba(255,255,255,.8); color: #333; font: 15px/21px "Liberation Sans", Arial, sans-serif; white-space: nowrap; }
.credit svg { margin-right: 5px; vertical-align: -1px; }
.credit a { color: #fff; }

.footer { border-top: 1px solid #dee2e6; padding-top: 31px; text-align: center; letter-spacing: -.05px; }
```
